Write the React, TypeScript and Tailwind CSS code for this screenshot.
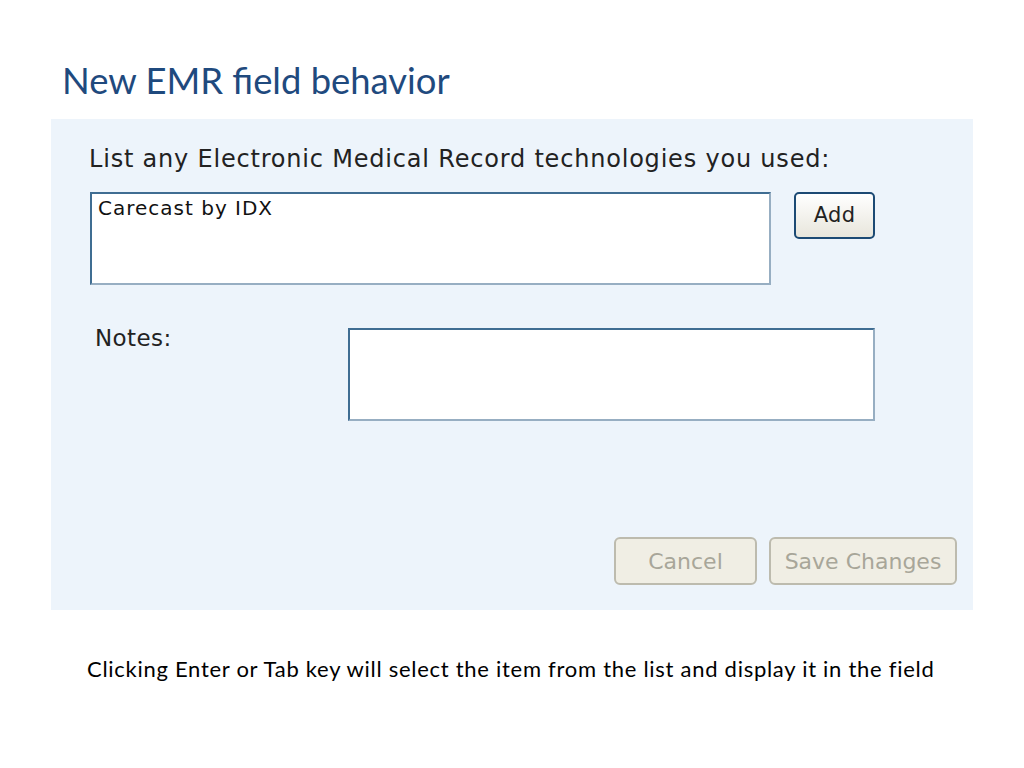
const tahoma = { fontFamily: '"DejaVu Sans", Verdana, sans-serif' }

const App = () => {
  return (
    <div className="w-[1024px] h-[768px] bg-white flex flex-col">
      <h1 className="pl-[62px] pt-[56px] h-[119px] text-[36.4px] leading-[48px] text-[#1f4a7e] font-['Lato',sans-serif]">
        New EMR field behavior
      </h1>

      <div className="ml-[51px] w-[922px] h-[491px] bg-[#edf4fb] flex flex-col pl-[38px] pt-[25px]" style={tahoma}>
        <p className="text-[24px] leading-[31px] text-[#222] tracking-[0.8px]">
          List any Electronic Medical Record technologies you used:
        </p>

        <div className="mt-[17px] flex items-start">
          <div className="ml-[1px] w-[681px] h-[93px] bg-white border-2 border-t-[#3f6d92] border-l-[#3f6d92] border-r-[#97aec2] border-b-[#97aec2] px-[6px] pt-[2px]">
            <span className="text-[20px] leading-[25px] text-[#111] tracking-[1px]">Carecast by IDX</span>
          </div>
          <button className="ml-[23px] w-[81px] h-[47px] rounded-[5px] border-2 border-[#1c4a74] bg-gradient-to-b from-white to-[#e8e6dc] text-[21px] text-[#222] tracking-[0.3px]">
            Add
          </button>
        </div>

        <div className="mt-[43px] flex items-start">
          <p className="ml-[6px] -mt-[3px] w-[253px] text-[23px] leading-[26px] text-[#222] tracking-[0.4px]">Notes:</p>
          <div className="w-[527px] h-[93px] bg-white border-2 border-t-[#3f6d92] border-l-[#3f6d92] border-r-[#97aec2] border-b-[#97aec2]" />
        </div>

        <div className="mt-[116px] flex justify-end pr-[16px] gap-[12px]">
          <button className="w-[143px] h-[48px] rounded-[6px] border-2 border-[#bdbbae] bg-[#f0eee4] text-[22px] text-[#a8a699]">
            Cancel
          </button>
          <button className="w-[188px] h-[48px] rounded-[6px] border-2 border-[#bdbbae] bg-[#f0eee4] text-[22px] text-[#a8a699]">
            Save Changes
          </button>
        </div>
      </div>

      <p className="mt-[44px] pl-[87px] text-[22px] leading-[30px] text-black tracking-[0.72px] font-['Lato',sans-serif]">
        Clicking Enter or Tab key will select the item from the list and display it in the field
      </p>
    </div>
  )
}

export default App
